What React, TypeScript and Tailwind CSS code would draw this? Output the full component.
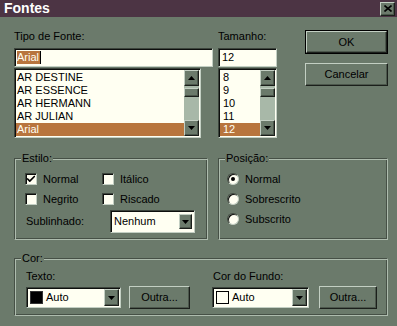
import { Check } from 'lucide-react';

const raised =
  'border border-t-[#c3cfc3] border-l-[#c3cfc3] border-r-[#1b1f1b] border-b-[#1b1f1b] shadow-[inset_-1px_-1px_0_#4c574c] bg-[#6b7a6b]';
const sunken =
  'border border-t-[#3c443c] border-l-[#3c443c] border-r-[#c3cfc3] border-b-[#c3cfc3] shadow-[inset_1px_1px_0_#0d0f0d]';
const etched =
  'border border-t-[#465046] border-l-[#465046] border-r-[#aebcae] border-b-[#aebcae] shadow-[inset_1px_1px_0_#aebcae,inset_-1px_-1px_0_#465046]';

function Arrow({ up = false }: { up?: boolean }) {
  return (
    <svg width="7" height="4" viewBox="0 0 7 4" className="block">
      <polygon points={up ? '0,4 7,4 3.5,0' : '0,0 7,0 3.5,4'} fill="#000" />
    </svg>
  );
}

function ScrollBar() {
  return (
    <div className="w-[15px] flex flex-col bg-[#a8b8a8] shrink-0">
      <div className={`${raised} h-[16px] flex items-center justify-center`}>
        <Arrow up />
      </div>
      <div className={`${raised} h-[9px] mt-[2px]`} />
      <div className="flex-1" />
      <div className={`${raised} h-[16px] flex items-center justify-center`}>
        <Arrow />
      </div>
    </div>
  );
}

function ListBox({
  items,
  selected,
  pad,
}: {
  items: string[];
  selected: string;
  pad: string;
}) {
  return (
    <div className={`${sunken} bg-[#fffff2] h-[70px] mt-[1px] flex`}>
      <div className="flex-1 pt-[2px] pl-[1px]">
        {items.map((it) => (
          <div
            key={it}
            className={`h-[13px] leading-[13px] whitespace-nowrap ${pad} ${
              it === selected ? 'bg-[#b8753d] text-[#fffff2]' : ''
            }`}
          >
            {it}
          </div>
        ))}
      </div>
      <div className="py-[1px] pr-[1px] flex">
        <ScrollBar />
      </div>
    </div>
  );
}

function Button({ label, w, isDefault = false }: { label: string; w: string; isDefault?: boolean }) {
  const inner = (
    <div className={`${raised} h-full w-full flex items-center justify-center`}>{label}</div>
  );
  return isDefault ? (
    <div className={`${w} h-[24px] border border-black`}>{inner}</div>
  ) : (
    <div className={`${w} h-[23px]`}>{inner}</div>
  );
}

function Combo({ w, children }: { w: string; children: React.ReactNode }) {
  return (
    <div className={`${sunken} ${w} h-[21px] bg-[#fffff2] flex items-stretch p-[1px]`}>
      <div className="flex-1 flex items-center pl-[2px]">{children}</div>
      <div className={`${raised} w-[15px] flex items-center justify-center`}>
        <Arrow />
      </div>
    </div>
  );
}

function CheckBox({ checked, label }: { checked?: boolean; label: string }) {
  return (
    <div className="flex items-center gap-[6px] h-[20px]">
      <div className={`${sunken} w-[12px] h-[12px] bg-[#fffff2] flex items-center justify-center`}>
        {checked && <Check size={10} strokeWidth={4} color="#000" />}
      </div>
      <span>{label}</span>
    </div>
  );
}

function Radio({ checked, label }: { checked?: boolean; label: string }) {
  return (
    <div className="flex items-center gap-[6px] h-[20px]">
      <div
        className={`${sunken} w-[12px] h-[12px] rounded-full bg-[#fffff2] flex items-center justify-center`}
      >
        {checked && <div className="w-[4px] h-[4px] rounded-full bg-black" />}
      </div>
      <span>{label}</span>
    </div>
  );
}

export default function App() {
  return (
    <div className="w-[397px] h-[326px] bg-[#6b7a6b] flex flex-col text-[11px] leading-[13px] text-black font-['Liberation_Sans',Arial,sans-serif] overflow-hidden">
      {/* title bar */}
      <div className="h-[17px] bg-[#4c3444] flex items-center justify-between pl-[4px] pr-[2px]">
        <span className="text-white font-bold text-[14px] leading-[17px]">Fontes</span>
        <div className={`${raised} w-[15px] h-[14px] flex items-center justify-center`}>
          <svg width="8" height="7" viewBox="0 0 8 7">
            <path d="M0.5 0.5 L7.5 6.5 M7.5 0.5 L0.5 6.5" stroke="#000" strokeWidth="1.6" />
          </svg>
        </div>
      </div>

      {/* font / size / buttons */}
      <div className="flex pl-[14px] pt-[13px]">
        <div className="w-[199px] flex flex-col">
          <span className="h-[13px]">Tipo de Fonte:</span>
          <div className={`${sunken} bg-[#fffff2] h-[19px] mt-[5px] flex items-center pl-[2px]`}>
            <span className="bg-[#b8753d] text-[#fffff2] leading-[13px] pr-[1px]">Arial</span>
            <span className="w-[1px] h-[13px] bg-black" />
          </div>
          <div className="w-[187px]">
            <ListBox
              items={['AR DESTINE', 'AR ESSENCE', 'AR HERMANN', 'AR JULIAN', 'Arial']}
              selected="Arial"
              pad="pl-[1px]"
            />
          </div>
        </div>

        <div className="w-[59px] ml-[5px] flex flex-col">
          <span className="h-[13px]">Tamanho:</span>
          <div className={`${sunken} bg-[#fffff2] h-[19px] mt-[5px] flex items-center pl-[3px]`}>
            12
          </div>
          <ListBox items={['8', '9', '10', '11', '12']} selected="12" pad="pl-[3px]" />
        </div>

        <div className="ml-[28px] flex flex-col gap-[9px]">
          <Button label="OK" w="w-[83px]" isDefault />
          <Button label="Cancelar" w="w-[83px]" />
        </div>
      </div>

      {/* style / position */}
      <div className="flex pl-[14px] mt-[14px]">
        <fieldset className={`${etched} w-[194px] h-[88px]`}>
          <legend className="ml-[6px] px-[1px] bg-[#6b7a6b] leading-[13px]">Estilo:</legend>
          <div className="pl-[10px] pt-[4px]">
            <div className="flex">
              <div className="w-[77px]">
                <CheckBox checked label="Normal" />
              </div>
              <CheckBox label="Itálico" />
            </div>
            <div className="flex">
              <div className="w-[77px]">
                <CheckBox label="Negrito" />
              </div>
              <CheckBox label="Riscado" />
            </div>
            <div className="flex items-center h-[23px] mt-[1px]">
              <span className="w-[85px] pl-[1px]">Sublinhado:</span>
              <div className="h-[23px] flex items-center">
                <div className={`${sunken} w-[85px] h-[23px] bg-[#fffff2] flex items-stretch p-[1px]`}>
                  <div className="flex-1 flex items-center pl-[2px]">Nenhum</div>
                  <div className={`${raised} w-[13px] mr-[1px] my-[2px] flex items-center justify-center`}>
                    <Arrow />
                  </div>
                </div>
              </div>
            </div>
          </div>
        </fieldset>

        <fieldset className={`${etched} w-[170px] h-[88px] ml-[10px]`}>
          <legend className="ml-[6px] px-[1px] bg-[#6b7a6b] leading-[13px]">Posição:</legend>
          <div className="pl-[8px] pt-[4px]">
            <Radio checked label="Normal" />
            <Radio label="Sobrescrito" />
            <Radio label="Subscrito" />
          </div>
        </fieldset>
      </div>

      {/* colour */}
      <div className="pl-[14px] mt-[12px]">
        <fieldset className={`${etched} w-[374px] h-[64px]`}>
          <legend className="ml-[6px] px-[1px] bg-[#6b7a6b] leading-[13px]">Cor:</legend>
          <div className="flex pt-[5px] pl-[11px]">
            <div className="w-[186px] flex flex-col">
              <span className="h-[13px]">Texto:</span>
              <div className="flex items-center h-[23px] mt-[3px]">
                <Combo w="w-[95px]">
                  <div className="w-[13px] h-[13px] bg-black border border-[#333]" />
                  <span className="ml-[3px]">Auto</span>
                </Combo>
                <div className="ml-[8px]">
                  <Button label="Outra..." w="w-[61px]" />
                </div>
              </div>
            </div>
            <div className="flex flex-col">
              <span className="h-[13px] pl-[1px]">Cor do Fundo:</span>
              <div className="flex items-center h-[23px] mt-[3px]">
                <Combo w="w-[97px]">
                  <div className="w-[13px] h-[13px] bg-[#fffff2] border border-black" />
                  <span className="ml-[3px]">Auto</span>
                </Combo>
                <div className="ml-[10px]">
                  <Button label="Outra..." w="w-[58px]" />
                </div>
              </div>
            </div>
          </div>
        </fieldset>
      </div>
    </div>
  );
}
